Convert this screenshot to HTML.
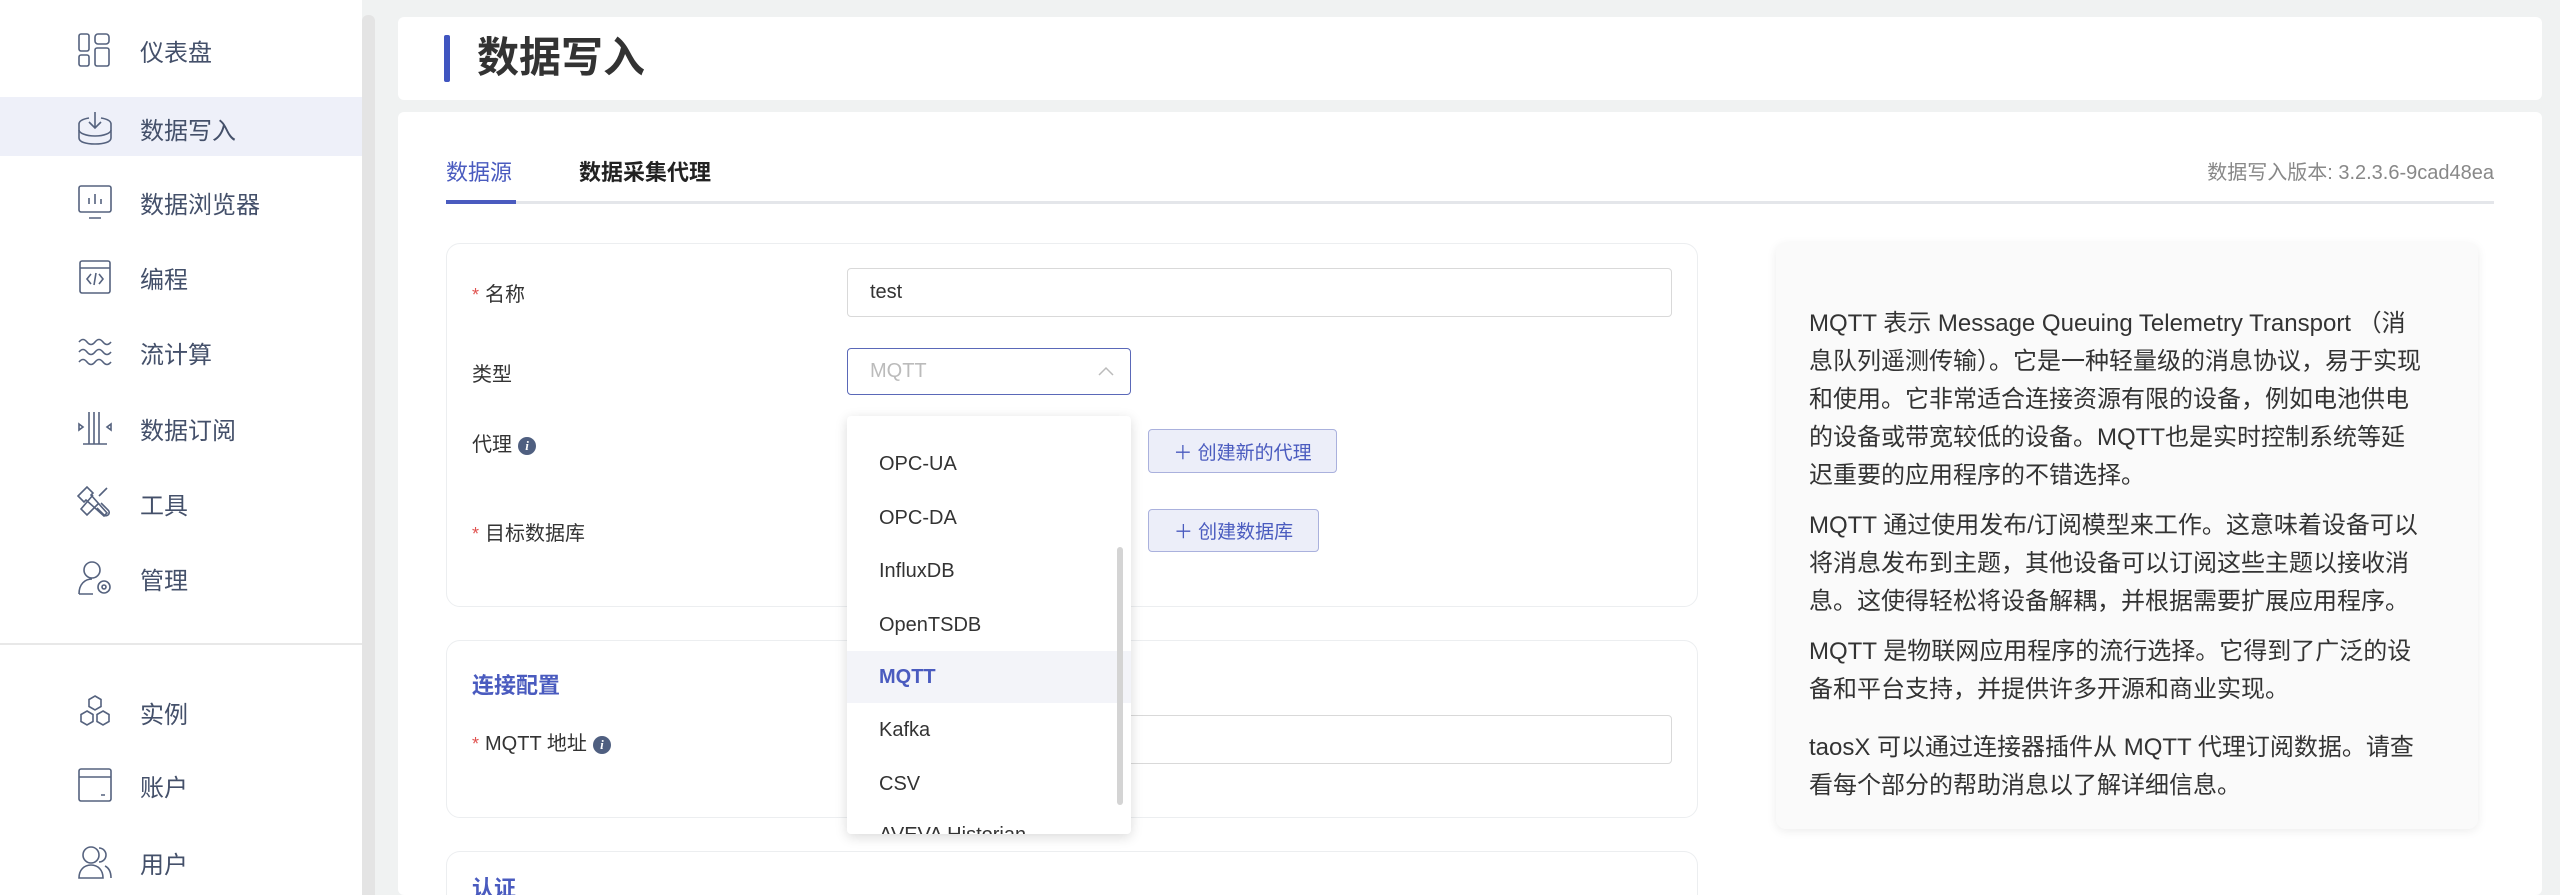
<!DOCTYPE html>
<html style="width:2560px;height:895px;overflow:hidden"><head><meta charset="utf-8"><style>
*{margin:0;padding:0;box-sizing:border-box}
body{width:2560px;height:895px;overflow:hidden;background:#f0f2f2;font-family:"Liberation Sans","Noto Sans CJK SC",sans-serif;color:#333;position:relative}
.a{position:absolute}
.side{left:0;top:0;width:362px;height:895px;background:#fff}
.sb{left:362px;top:15px;width:13px;height:880px;background:#e4e4e4;border-radius:6px 6px 0 0}
.item{position:absolute;left:0;width:362px;height:58px;display:flex;align-items:center;font-size:24px;color:#44506a}
.item svg{position:absolute;left:77px;width:36px;height:36px;fill:none;stroke:#55627e;stroke-width:1.6}
.item span{position:absolute;left:140px}
.card{background:#fff;border-radius:6px}
.lbl{position:absolute;font-size:20px;color:#333}
.lbl b{color:#e0524f;font-weight:normal;margin-right:6px;font-size:18px}
.info{display:inline-block;width:18px;height:18px;border-radius:50%;background:#4f5f80;color:#fff;font-size:13px;font-style:italic;font-weight:bold;text-align:center;line-height:18px;margin-left:6px;vertical-align:1px;font-family:"Liberation Serif",serif}
.inp{position:absolute;border:1.5px solid #d9d9d9;border-radius:4px;background:#fff}
.btn{position:absolute;background:#eceef9;border:1.5px solid #aab1dd;border-radius:4px;color:#4a5bbf;font-size:19px;display:flex;align-items:center;justify-content:center}
.dd .o{position:absolute;left:0;width:284px;height:52px;padding-left:32px;font-size:20px;line-height:52px;color:#333}
.sub{position:absolute;border:1.5px solid #eceef0;border-radius:14px;background:#fff}
.help{left:1776px;top:243px;width:702px;height:586px;background:#fafafa;border-radius:10px;box-shadow:0 2px 10px rgba(0,0,0,.08)}
.help p{position:absolute;left:33px;font-size:24px;line-height:38px;color:#333;white-space:nowrap}
</style></head><body>
<div class="a side"></div>
<div class="a sb"></div>
<div class="a" style="left:0;top:97px;width:362px;height:59px;background:#eef0f9"></div>
<div class="item" style="top:21px"><svg viewBox="0 0 36 36"><rect x="2" y="2" width="10" height="17" rx="2"/><rect x="2" y="23" width="10" height="11" rx="2"/><rect x="18" y="2" width="14" height="10" rx="3"/><rect x="18" y="16" width="14" height="18" rx="2"/></svg><span>仪表盘</span></div>
<div class="item" style="top:99px"><svg viewBox="0 0 36 36"><path d="M12 8C6 9 2 11 2 14v14c0 4 7 6 16 6s16-2 16-6V14c0-3-4-5-10-6"/><path d="M2 20c0 3 7 6 16 6s16-3 16-6"/><path d="M18 2v16M12 12l6 6 6-6"/></svg><span>数据写入</span></div>
<div class="item" style="top:173px"><svg viewBox="0 0 36 36"><rect x="2" y="2" width="32" height="26" rx="2"/><path d="M12 34h12M12 20v-6M18 20v-10M24 20v-5"/></svg><span>数据浏览器</span></div>
<div class="item" style="top:248px"><svg viewBox="0 0 36 36"><rect x="3" y="2" width="30" height="32" rx="2"/><path d="M3 9h30M14 15l-4 5 4 5M22 15l4 5-4 5M19 14l-2 12"/></svg><span>编程</span></div>
<div class="item" style="top:323px"><svg viewBox="0 0 36 36"><path d="M2 8q4-5 8 0t8 0 8 0 8 0M2 18q4-5 8 0t8 0 8 0 8 0M2 28q4-5 8 0t8 0 8 0 8 0"/></svg><span>流计算</span></div>
<div class="item" style="top:399px"><svg viewBox="0 0 36 36"><path d="M12 2v32M17 2v32M22 2v32M6 34h24M2 14l4 3-4 3zM34 14l-4 3 4 3z"/></svg><span>数据订阅</span></div>
<div class="item" style="top:474px"><svg viewBox="0 0 36 36"><path d="M4 8l6-6 6 6-2 2 16 18-3 3-18-16-2 2-6-6zM30 3l-8 8M24 18l7 7a3 3 0 01-4 5l-7-7M16 10l-12 14 6 6 12-12"/></svg><span>工具</span></div>
<div class="item" style="top:549px"><svg viewBox="0 0 36 36"><circle cx="15" cy="10" r="8"/><path d="M2 34c0-10 6-15 13-15M2 34h14"/><circle cx="27" cy="27" r="6"/><circle cx="27" cy="27" r="2"/></svg><span>管理</span></div>
<div class="a" style="left:0;top:643px;width:362px;height:2px;background:#e8e8e8"></div>
<div class="item" style="top:683px"><svg viewBox="0 0 36 36"><path d="M18 2l6 3.5v7L18 16l-6-3.5v-7zM10 17l6 3.5v7L10 31l-6-3.5v-7zM26 17l6 3.5v7L26 31l-6-3.5v-7z"/></svg><span>实例</span></div>
<div class="item" style="top:756px"><svg viewBox="0 0 36 36"><rect x="2" y="2" width="32" height="32" rx="2"/><path d="M2 10h32M24 28h4"/></svg><span>账户</span></div>
<div class="item" style="top:833px"><svg viewBox="0 0 36 36"><circle cx="14" cy="11" r="8"/><path d="M2 34c0-8 5-13 12-13s12 5 12 13zM22 4a7 7 0 010 14M28 22c4 2 6 6 6 12"/></svg><span>用户</span></div>

<div class="a card" style="left:398px;top:17px;width:2144px;height:83px"></div>
<div class="a" style="left:444px;top:35px;width:6px;height:47px;background:#4055c0;border-radius:2px"></div>
<div class="a" style="left:477px;top:30px;font-size:42px;font-weight:bold;color:#333;line-height:56px">数据写入</div>

<div class="a card" style="left:398px;top:112px;width:2144px;height:783px"></div>
<div class="a" style="left:446px;top:160px;font-size:22px;color:#4a5bbf;line-height:26px">数据源</div>
<div class="a" style="left:579px;top:160px;font-size:22px;color:#222;line-height:26px;font-weight:bold">数据采集代理</div>
<div class="a" style="left:446px;top:201px;width:2048px;height:3px;background:#e4e6ea"></div>
<div class="a" style="left:446px;top:200px;width:70px;height:4px;background:#4a5bbf"></div>
<div class="a" style="right:66px;top:160px;font-size:20px;color:#888;line-height:26px">数据写入版本: 3.2.3.6-9cad48ea</div>

<div class="sub" style="left:446px;top:243px;width:1252px;height:364px"></div>
<div class="lbl" style="left:472px;top:278px"><b>*</b>名称</div>
<div class="inp" style="left:847px;top:268px;width:825px;height:49px"><span style="position:absolute;left:22px;top:12px;font-size:20px">test</span></div>
<div class="lbl" style="left:472px;top:358px">类型</div>
<div class="inp" style="left:847px;top:348px;width:284px;height:47px;border-color:#5a68b8"><span style="position:absolute;left:22px;top:11px;font-size:20px;color:#bbb">MQTT</span><svg style="position:absolute;right:16px;top:16px" width="16" height="12" viewBox="0 0 16 12"><path d="M1 10l7-7 7 7" fill="none" stroke="#bbb" stroke-width="1.5"/></svg></div>
<div class="lbl" style="left:472px;top:428px">代理<span class="info">i</span></div>
<div class="btn" style="left:1148px;top:429px;width:189px;height:44px">＋ 创建新的代理</div>
<div class="lbl" style="left:472px;top:517px"><b>*</b>目标数据库</div>
<div class="btn" style="left:1148px;top:509px;width:171px;height:43px">＋ 创建数据库</div>

<div class="sub" style="left:446px;top:640px;width:1252px;height:178px"></div>
<div class="a" style="left:472px;top:668px;font-size:22px;font-weight:bold;color:#4a5bbf">连接配置</div>
<div class="lbl" style="left:472px;top:727px"><b>*</b>MQTT 地址<span class="info">i</span></div>
<div class="inp" style="left:847px;top:715px;width:825px;height:49px"></div>
<div class="sub" style="left:446px;top:851px;width:1252px;height:44px;border-bottom:none;border-radius:14px 14px 0 0"></div>
<div class="a" style="left:472px;top:876px;font-size:22px;font-weight:bold;color:#4a5bbf;line-height:26px">认证</div>

<div class="a dd" style="left:847px;top:416px;width:284px;height:418px;background:#fff;border-radius:4px;box-shadow:0 3px 12px rgba(0,0,0,.15);overflow:hidden">
<div class="o" style="top:-34px">PI - admin</div>
<div class="o" style="top:22px">OPC-UA</div>
<div class="o" style="top:76px">OPC-DA</div>
<div class="o" style="top:129px">InfluxDB</div>
<div class="o" style="top:183px">OpenTSDB</div>
<div class="o" style="top:235px;background:#f3f4f9;color:#4a5bbf;font-weight:bold">MQTT</div>
<div class="o" style="top:288px">Kafka</div>
<div class="o" style="top:342px">CSV</div>
<div class="o" style="top:393px">AVEVA Historian</div>
<div style="position:absolute;left:270px;top:131px;width:6px;height:258px;border-radius:3px;background:#d4d4d4"></div>
</div>

<div class="a help">
<p style="top:62px">MQTT 表示 Message Queuing Telemetry Transport （消<br>息队列遥测传输）。它是一种轻量级的消息协议，易于实现<br>和使用。它非常适合连接资源有限的设备，例如电池供电<br>的设备或带宽较低的设备。MQTT也是实时控制系统等延<br>迟重要的应用程序的不错选择。</p>
<p style="top:264px">MQTT 通过使用发布/订阅模型来工作。这意味着设备可以<br>将消息发布到主题，其他设备可以订阅这些主题以接收消<br>息。这使得轻松将设备解耦，并根据需要扩展应用程序。</p>
<p style="top:390px">MQTT 是物联网应用程序的流行选择。它得到了广泛的设<br>备和平台支持，并提供许多开源和商业实现。</p>
<p style="top:486px">taosX 可以通过连接器插件从 MQTT 代理订阅数据。请查<br>看每个部分的帮助消息以了解详细信息。</p>
</div>
</body></html>
